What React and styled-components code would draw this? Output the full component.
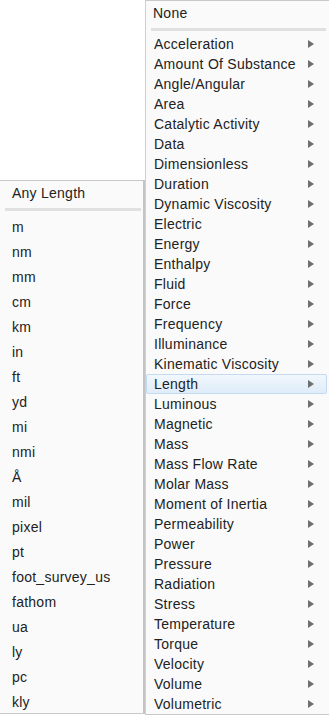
import styled, { createGlobalStyle } from 'styled-components'

const GlobalStyle = createGlobalStyle`
  html, body {
    margin: 0;
    padding: 0;
    background: #fff;
  }
  body {
    font-family: 'Liberation Sans', Arial, sans-serif;
    font-size: 14px;
    letter-spacing: 0.25px;
    color: #222;
  }
`

const Page = styled.div`
  display: flex;
  align-items: flex-start;
  width: 329px;
  height: 715px;
  overflow: hidden;
`

const UnitColumn = styled.div`
  width: 145px;
  padding-top: 180px;
  flex-shrink: 0;
`

const Menu = styled.div`
  background: #fafafa;
  box-sizing: border-box;
`

const UnitMenu = styled(Menu)`
  border-top: 1px solid #c9c9c9;
  border-right: 2px solid #c4c4c4;
  border-bottom: 1px solid #c9c9c9;
  height: 534px;
`

const CategoryMenu = styled(Menu)`
  flex: 1;
  border-top: 1px solid #c9c9c9;
  border-left: 1px solid #cfcfcf;
  border-bottom: 1px solid #c9c9c9;
  height: 715px;
`

const Header = styled.div`
  height: 24px;
  display: flex;
  align-items: center;
  padding-left: ${(p) => p.indent}px;
`

const Separator = styled.div`
  height: 3px;
  background: #e0e0e0;
  margin: 3px ${(p) => p.right}px 3px ${(p) => p.left}px;
`

const UnitItem = styled.div`
  height: 25px;
  display: flex;
  align-items: center;
  padding-left: 12px;
`

const CategoryItem = styled.div`
  height: 20px;
  box-sizing: border-box;
  display: flex;
  align-items: center;
  justify-content: space-between;
  padding: 0 12px 0 7px;
  border: 1px solid transparent;
  border-radius: 2px;
  margin-right: 2px;

  ${(p) =>
    p.active &&
    `
    background: linear-gradient(#f1f7fd, #dfecfa);
    border-color: #c4daf1;
  `}
`

const Arrow = styled.span`
  width: 0;
  height: 0;
  border-left: 6px solid #6f6f6f;
  border-top: 4px solid transparent;
  border-bottom: 4px solid transparent;
`

const units = [
  'm', 'nm', 'mm', 'cm', 'km', 'in', 'ft', 'yd', 'mi', 'nmi', 'Å', 'mil',
  'pixel', 'pt', 'foot_survey_us', 'fathom', 'ua', 'ly', 'pc', 'kly',
]

const categories = [
  'Acceleration', 'Amount Of Substance', 'Angle/Angular', 'Area',
  'Catalytic Activity', 'Data', 'Dimensionless', 'Duration',
  'Dynamic Viscosity', 'Electric', 'Energy', 'Enthalpy', 'Fluid', 'Force',
  'Frequency', 'Illuminance', 'Kinematic Viscosity', 'Length', 'Luminous',
  'Magnetic', 'Mass', 'Mass Flow Rate', 'Molar Mass', 'Moment of Inertia',
  'Permeability', 'Power', 'Pressure', 'Radiation', 'Stress', 'Temperature',
  'Torque', 'Velocity', 'Volume', 'Volumetric',
]

export default function App() {
  return (
    <>
      <GlobalStyle />
      <Page>
        <UnitColumn>
          <UnitMenu>
            <Header indent={12}>Any Length</Header>
            <Separator left={5} right={2} />
            {units.map((u) => (
              <UnitItem key={u}>{u}</UnitItem>
            ))}
          </UnitMenu>
        </UnitColumn>
        <CategoryMenu>
          <Header indent={7}>None</Header>
          <Separator left={5} right={3} />
          {categories.map((c) => (
            <CategoryItem key={c} active={c === 'Length'}>
              {c}
              <Arrow />
            </CategoryItem>
          ))}
        </CategoryMenu>
      </Page>
    </>
  )
}
